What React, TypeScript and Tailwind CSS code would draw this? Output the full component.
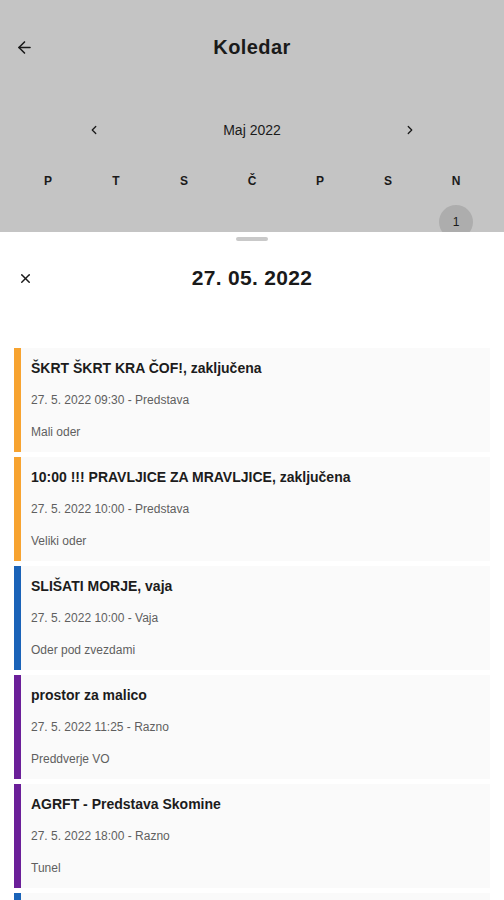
import { ArrowLeft, ChevronLeft, ChevronRight, X } from "lucide-react";

const days = ["P", "T", "S", "Č", "P", "S", "N"];

const events = [
  { title: "ŠKRT ŠKRT KRA ČOF!, zaključena", meta: "27. 5. 2022 09:30 - Predstava", place: "Mali oder", bar: "bg-[#f7a330]" },
  { title: "10:00 !!! PRAVLJICE ZA MRAVLJICE, zaključena", meta: "27. 5. 2022 10:00 - Predstava", place: "Veliki oder", bar: "bg-[#f7a330]" },
  { title: "SLIŠATI MORJE, vaja", meta: "27. 5. 2022 10:00 - Vaja", place: "Oder pod zvezdami", bar: "bg-[#1a63b8]" },
  { title: "prostor za malico", meta: "27. 5. 2022 11:25 - Razno", place: "Preddverje VO", bar: "bg-[#6b1f99]" },
  { title: "AGRFT - Predstava Skomine", meta: "27. 5. 2022 18:00 - Razno", place: "Tunel", bar: "bg-[#6b1f99]" },
  { title: "", meta: "", place: "", bar: "bg-[#1a63b8]" },
];

export default function App() {
  return (
    <div
      className="relative h-[900px] w-[504px] overflow-hidden bg-[#c4c4c4] text-[#1a1a1a]"
      style={{ fontFamily: "'Liberation Sans', Arial, sans-serif" }}
    >
      {/* Calendar behind the sheet */}
      <div className="relative flex h-[94px] items-center justify-center">
        <ArrowLeft className="absolute left-[15px] top-[38px]" size={19} strokeWidth={2} />
        <h1 className="text-[20px] font-bold tracking-[0.4px]">Koledar</h1>
      </div>
      <div className="mx-auto flex h-[72px] w-[330px] items-center justify-between">
        <ChevronLeft size={14} strokeWidth={2.2} />
        <span className="text-[14px]">Maj 2022</span>
        <ChevronRight size={14} strokeWidth={2.2} />
      </div>
      <div className="mx-[14px] grid h-[30px] grid-cols-7 items-center">
        {days.map((d, i) => (
          <span key={i} className="text-center text-[12px] font-bold">
            {d}
          </span>
        ))}
      </div>
      <div className="mx-[14px] grid grid-cols-7 pt-[9px]">
        <div className="col-start-7 flex justify-center">
          <div className="flex h-[34px] w-[34px] items-center justify-center rounded-full bg-[#adadad] text-[12px]">
            1
          </div>
        </div>
      </div>

      {/* Bottom sheet */}
      <div className="absolute inset-x-0 top-[232px] bottom-0 bg-white">
        <div className="mx-auto mt-[5px] h-[4px] w-[32px] rounded-full bg-[#c9c9c9]" />
        <div className="relative flex h-[74px] items-center justify-center">
          <X className="absolute left-[18px] top-[30px]" size={15} strokeWidth={2.4} />
          <h2 className="text-[21px] font-bold tracking-[0.3px]">27. 05. 2022</h2>
        </div>
        <div className="mt-[33px] flex flex-col gap-[5px] px-[14px]">
          {events.map((e, i) => (
            <div key={i} className="flex h-[104px]">
              <div className={`w-[7px] shrink-0 ${e.bar}`} />
              <div className="flex-1 bg-[#fafafa] pl-[10px] pt-[4px]">
                <div className="flex h-[32px] items-center text-[14px] font-bold text-[#1c1c1c]">{e.title}</div>
                <div className="flex h-[32px] items-center text-[12px] text-[#5f5f5f]">{e.meta}</div>
                <div className="flex h-[32px] items-center text-[12px] text-[#5f5f5f]">{e.place}</div>
              </div>
            </div>
          ))}
        </div>
      </div>
    </div>
  );
}
